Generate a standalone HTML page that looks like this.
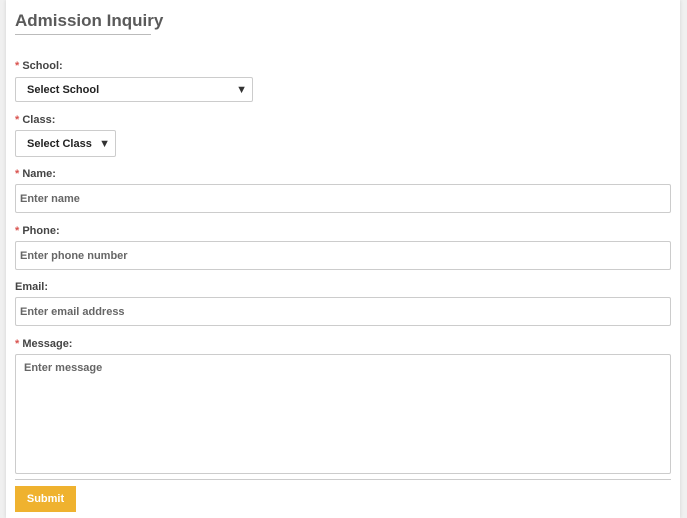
<!DOCTYPE html>
<html><head><style>
body{margin:0;width:687px;height:518px;background:#f0f0f0;font-family:"Liberation Sans",sans-serif;overflow:hidden;position:relative}
.panel{position:absolute;left:6px;top:0;width:674px;height:518px;background:#fff;box-shadow:0 0 4px rgba(0,0,0,.12)}
.a{position:absolute}
h1{position:absolute;left:15px;top:11px;margin:0;font-size:17px;font-weight:bold;color:#5a5a5a}
.ul{left:15px;top:34px;width:136px;height:1px;background:#bbb}
.lb{left:15px;font-size:11px;font-weight:bold;color:#444}
.lb i{color:#d9534f;font-style:normal}
.box{border:1px solid #ccc;border-radius:2px;background:#fff;box-sizing:border-box;font-size:11px;font-weight:bold;color:#666}
.sel{color:#222}
.arr{position:absolute;right:5px;top:50%;transform:translateY(-50%);font-size:11px;color:#333}
</style></head><body>
<div class="panel"></div>
<h1>Admission Inquiry</h1>
<div class="a ul"></div>
<div class="a lb" style="top:60px"><i>*</i> School:</div>
<div class="a box sel" style="left:15px;top:77px;width:238px;height:25px;padding:6px 11px">Select School<span class="arr">▼</span></div>
<div class="a lb" style="top:114px"><i>*</i> Class:</div>
<div class="a box sel" style="left:15px;top:130px;width:101px;height:27px;padding:7px 11px">Select Class<span class="arr">▼</span></div>
<div class="a lb" style="top:168px"><i>*</i> Name:</div>
<div class="a box" style="left:15px;top:184px;width:656px;height:29px;padding:8px 4px">Enter name</div>
<div class="a lb" style="top:225px"><i>*</i> Phone:</div>
<div class="a box" style="left:15px;top:241px;width:656px;height:29px;padding:8px 4px">Enter phone number</div>
<div class="a lb" style="top:281px">Email:</div>
<div class="a box" style="left:15px;top:297px;width:656px;height:29px;padding:8px 4px">Enter email address</div>
<div class="a lb" style="top:338px"><i>*</i> Message:</div>
<div class="a box" style="left:15px;top:354px;width:656px;height:120px;padding:7px 8px">Enter message</div>
<div class="a" style="left:15px;top:479px;width:656px;height:1px;background:#ccc"></div>
<div class="a" style="left:15px;top:486px;width:61px;height:26px;background:#efb22f;color:#fff;font-size:11px;font-weight:bold;text-align:center;line-height:26px">Submit</div>
</body></html>
